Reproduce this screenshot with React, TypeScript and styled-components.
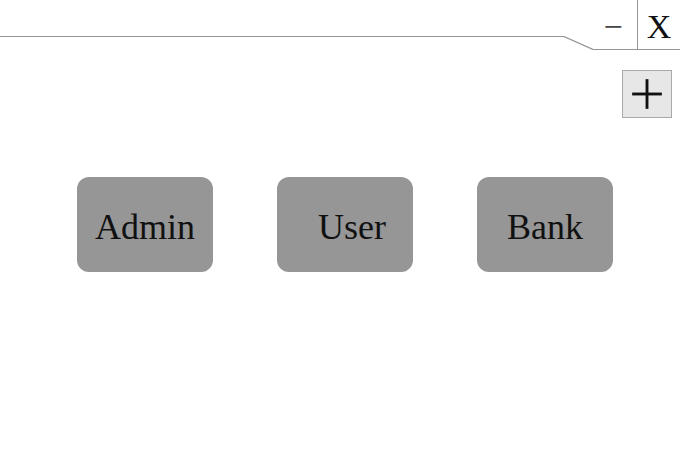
import React from 'react'
import styled, { createGlobalStyle } from 'styled-components'
import { Plus } from 'lucide-react'

const GlobalStyle = createGlobalStyle`
  html, body {
    margin: 0;
    padding: 0;
    background: #ffffff;
    font-family: 'Liberation Serif', 'Times New Roman', serif;
    color: #111;
  }
`

const Page = styled.div`
  width: 680px;
  height: 453px;
  overflow: hidden;
  display: flex;
  flex-direction: column;
`

const Header = styled.div`
  display: flex;
  align-items: flex-start;
  height: 50px;
`

const Rule = styled.div`
  flex: 1;
  height: 36px;
  border-bottom: 1px solid #959595;
`

const Slant = styled.svg`
  display: block;
  flex: none;
`

const Controls = styled.div`
  display: flex;
  height: 49px;
  border-bottom: 1px solid #959595;
`

const WinButton = styled.button<{ $divider?: boolean; $w: number }>`
  width: ${(p) => p.$w}px;
  height: 49px;
  padding: 4px 0 0;
  border: none;
  border-left: ${(p) => (p.$divider ? '1px solid #959595' : 'none')};
  background: transparent;
  font-family: 'Liberation Serif', 'Times New Roman', serif;
  font-size: 34px;
  color: #111;
  display: flex;
  align-items: center;
  justify-content: center;
  cursor: pointer;
`

const MinusGlyph = styled.span`
  color: #444;
  margin-right: 4px;
`

const Toolbar = styled.div`
  display: flex;
  justify-content: flex-end;
  padding: 20px 8px 0 0;
`

const AddButton = styled.button`
  width: 50px;
  height: 48px;
  padding: 0;
  border: 1px solid #a9a9a9;
  background: #e7e7e7;
  color: #111;
  display: flex;
  align-items: center;
  justify-content: center;
  cursor: pointer;
`

const CardRow = styled.div`
  display: flex;
  gap: 64px;
  padding: 59px 0 0 77px;
`

const Card = styled.button<{ $indent?: number }>`
  width: 136px;
  height: 95px;
  border: none;
  border-radius: 12px;
  background: #969696;
  padding: 4px 0 0 ${(p) => p.$indent ?? 0}px;
  font-family: 'Liberation Serif', 'Times New Roman', serif;
  font-size: 36px;
  color: #111;
  display: flex;
  align-items: center;
  justify-content: center;
  cursor: pointer;
`

const App: React.FC = () => {
  return (
    <Page>
      <GlobalStyle />
      <Header>
        <Rule />
        <Slant width="29" height="50" viewBox="0 0 29 50">
          <polyline points="0,36.5 29,49.5" fill="none" stroke="#959595" strokeWidth="1.2" />
        </Slant>
        <Controls>
          <WinButton $w={44}>
            <MinusGlyph>−</MinusGlyph>
          </WinButton>
          <WinButton $w={43} $divider>
            X
          </WinButton>
        </Controls>
      </Header>

      <Toolbar>
        <AddButton aria-label="Add">
          <Plus size={46} strokeWidth={1.5} strokeLinecap="square" />
        </AddButton>
      </Toolbar>

      <CardRow>
        <Card>Admin</Card>
        <Card $indent={14}>User</Card>
        <Card>Bank</Card>
      </CardRow>
    </Page>
  )
}

export default App
